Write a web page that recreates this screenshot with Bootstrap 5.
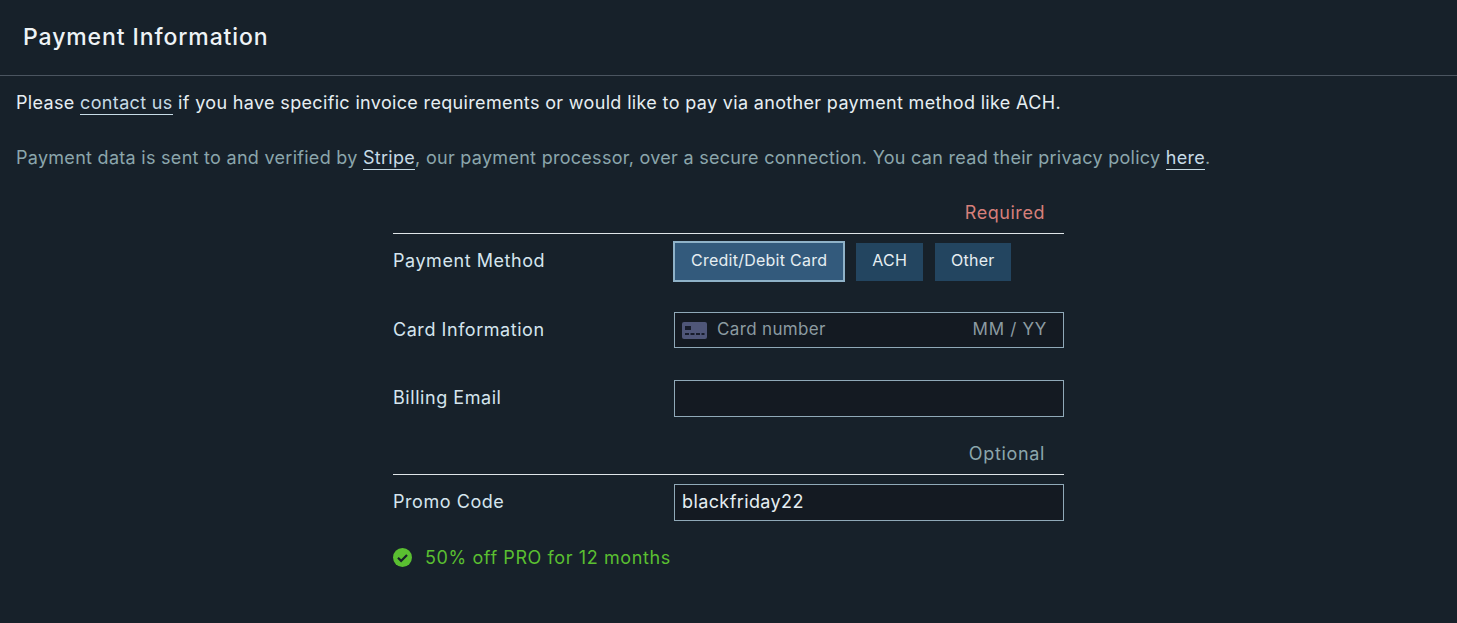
<!DOCTYPE html>
<html lang="en">

<head>
  <meta charset="UTF-8">
  <title>Payment Information</title>
  <meta name="viewport" content="width=device-width, initial-scale=1">
  <link href="https://cdn.jsdelivr.net/npm/bootstrap@5.3.0/dist/css/bootstrap.min.css" rel="stylesheet">
  <style>
    body { background: #17212a; color: #e6eef2; font-family: Inter, sans-serif; font-size: 18px; line-height: 24px; letter-spacing: .55px; }
    .pay-header { height: 76px; padding: 24px 23px 0; border-bottom: 1px solid #4b5560; }
    .pay-header h1 { font-family: Inter, sans-serif; font-size: 23px; line-height: 26px; font-weight: 500; letter-spacing: .9px; margin: 0; color: #eef3f6; }
    .pay-body { padding: 15px 16px 0; }
    .pay-body p { margin: 0 0 31px; white-space: nowrap; letter-spacing: .34px; }
    .pay-body p.muted-note { color: #8ba6ac; margin-bottom: 0; letter-spacing: .285px; }
    .pay-body a { color: #c7dbe6; text-decoration: none; padding-bottom: 1px; border-bottom: 1px solid #c7dbe6; }
    .pay-form { width: 671px; margin: 30px 0 0 377px; }
    .pay-section { padding: 1px 19px 0 0; text-align: right; height: 34px; border-bottom: 1px solid #dfe5e8; }
    .pay-section.required { color: #d67f7a; }
    .pay-section.optional { color: #8ba6ac; height: 33px; margin-top: 25px; padding-top: 0; letter-spacing: .65px; }
    .pay-row { align-items: center; }
    .pay-row-method { margin-top: 7px; height: 41px; }
    .pay-row-card { margin-top: 30px; }
    .pay-row-email { margin-top: 32px; }
    .pay-row-promo { margin-top: 9px; }
    .pay-label { width: 281px; flex: none; color: #d5e5ee; padding-bottom: 2px; }
    .pay-row-card .pay-label { padding-bottom: 0; }
    .pay-methods { column-gap: 12px; align-items: center; }
    .pay-method { padding: 0 16px 3px; height: 38px; background: #234560; color: #e6eef2; font-size: 16px; line-height: 24px; letter-spacing: .25px; border: 0; border-radius: 0; }
    .pay-method.selected { height: 41px; background: #335a7c; border: 2px solid #8fb2c8; margin: 0 -1px 0 -1px; }
    .pay-input { width: 390px; height: 37px; background: #141a22; border: 1px solid #90a9b8; padding: 0 7px 2px; color: #e6eef2; letter-spacing: .4px; }
    .pay-row-card .pay-input { height: 36px; padding-bottom: 0; }
    .pay-input .hint { color: #8c9ba1; font-size: 17px; letter-spacing: .35px; padding-bottom: 2px; }
    .pay-input .hint-date { letter-spacing: .7px; margin-right: 9px; }
    .pay-input svg { margin-right: 10px; }
    .pay-promo { color: #5abf31; margin-top: 24px; letter-spacing: .6px; }
    .pay-promo span { padding-top: 1px; }
    .pay-promo svg { margin-right: 13px; }
  </style>
</head>

<body>
  <div class="pay-header">
    <h1>Payment Information</h1>
  </div>

  <div class="pay-body">
    <p>Please <a href="#">contact us</a> if you have specific invoice requirements or would like to pay via another payment method like ACH.</p>
    <p class="muted-note">Payment data is sent to and verified by <a href="#">Stripe</a>, our payment processor, over a secure connection. You can read their privacy policy <a href="#">here</a>.</p>

    <div class="pay-form">
      <div class="pay-section required">Required</div>

      <div class="d-flex pay-row pay-row-method">
        <div class="pay-label">Payment Method</div>
        <div class="d-flex pay-methods">
          <button type="button" class="pay-method selected">Credit/Debit Card</button>
          <button type="button" class="pay-method">ACH</button>
          <button type="button" class="pay-method">Other</button>
        </div>
      </div>

      <div class="d-flex pay-row pay-row-card">
        <div class="pay-label">Card Information</div>
        <div class="pay-input d-flex align-items-center">
          <svg width="25" height="17" viewBox="0 0 25 17">
            <rect width="25" height="17" rx="2" fill="#4f5678"/>
            <rect x="3" y="4" width="6" height="4" fill="#171c2b"/>
            <path d="M3 11h4v2H3zM8.500 11h4v2h-4zM14 11h4v2h-4zM19.500 11h3v2h-3z" fill="#171c2b"/>
          </svg>
          <span class="hint">Card number</span>
          <span class="hint hint-date ms-auto">MM / YY</span>
        </div>
      </div>

      <div class="d-flex pay-row pay-row-email">
        <div class="pay-label">Billing Email</div>
        <div class="pay-input"></div>
      </div>

      <div class="pay-section optional">Optional</div>

      <div class="d-flex pay-row pay-row-promo">
        <div class="pay-label">Promo Code</div>
        <div class="pay-input d-flex align-items-center">blackfriday22</div>
      </div>

      <div class="d-flex align-items-center pay-promo">
        <svg width="19" height="19" viewBox="0 0 19 19">
          <circle cx="9.500" cy="9.500" r="9.500" fill="#5abf31"/>
          <path d="M5 9.800l3.100 3.100 5.900-6" fill="none" stroke="#17212a" stroke-width="2.200"/>
        </svg>
        <span>50% off PRO for 12 months</span>
      </div>
    </div>
  </div>

  <script src="https://cdn.jsdelivr.net/npm/bootstrap@5.3.0/dist/js/bootstrap.bundle.min.js"></script>
</body>
</html>
